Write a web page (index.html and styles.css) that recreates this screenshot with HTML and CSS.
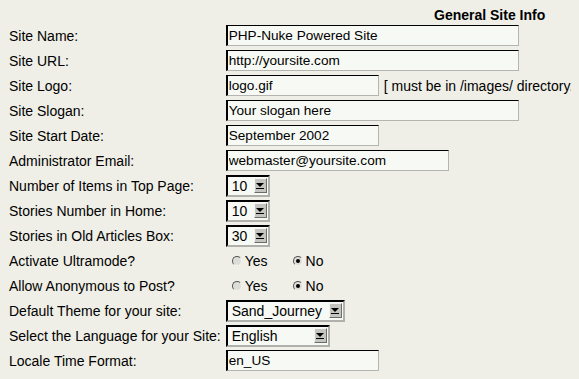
FILE: index.html
```html
<!DOCTYPE html>
<html>
<head>
<meta charset="utf-8">
<link rel="stylesheet" href="styles.css">
</head>
<body>
<div class="title">General Site Info</div>
<div class="form">
  <div class="label">Site Name:</div>
  <div class="field"><input class="text w-long" type="text" value="PHP-Nuke Powered Site"></div>

  <div class="label">Site URL:</div>
  <div class="field"><input class="text w-long" type="text" value="http://yoursite.com"></div>

  <div class="label">Site Logo:</div>
  <div class="field"><input class="text w-short" type="text" value="logo.gif"><span class="note">[ must be in /images/ directory.</span></div>

  <div class="label">Site Slogan:</div>
  <div class="field"><input class="text w-long" type="text" value="Your slogan here"></div>

  <div class="label">Site Start Date:</div>
  <div class="field"><input class="text w-short" type="text" value="September 2002"></div>

  <div class="label">Administrator Email:</div>
  <div class="field"><input class="text w-mid" type="text" value="webmaster@yoursite.com"></div>

  <div class="label">Number of Items in Top Page:</div>
  <div class="field"><div class="select w-num"><span class="sel-text">10</span><span class="sel-btn"><i class="arrow"></i></span></div></div>

  <div class="label">Stories Number in Home:</div>
  <div class="field"><div class="select w-num"><span class="sel-text">10</span><span class="sel-btn"><i class="arrow"></i></span></div></div>

  <div class="label">Stories in Old Articles Box:</div>
  <div class="field"><div class="select w-num"><span class="sel-text">30</span><span class="sel-btn"><i class="arrow"></i></span></div></div>

  <div class="label">Activate Ultramode?</div>
  <div class="field radios"><span class="radio"></span><span class="rlabel">Yes</span><span class="radio checked"></span><span class="rlabel">No</span></div>

  <div class="label">Allow Anonymous to Post?</div>
  <div class="field radios"><span class="radio"></span><span class="rlabel">Yes</span><span class="radio checked"></span><span class="rlabel">No</span></div>

  <div class="label">Default Theme for your site:</div>
  <div class="field"><div class="select w-theme"><span class="sel-text">Sand_Journey</span><span class="sel-btn"><i class="arrow"></i></span></div></div>

  <div class="label">Select the Language for your Site:</div>
  <div class="field"><div class="select w-lang"><span class="sel-text">English</span><span class="sel-btn"><i class="arrow"></i></span></div></div>

  <div class="label">Locale Time Format:</div>
  <div class="field"><input class="text w-short" type="text" value="en_US"></div>
</div>
</body>
</html>
```

FILE: styles.css
```css
html {
  overflow: hidden;
  background: #efefe7;
}
body {
  margin: 8px;
  font-family: "Liberation Sans", Arial, sans-serif;
  font-size: 14px;
  color: #000;
}
.title {
  font-weight: bold;
  font-size: 14px;
  line-height: 14px;
  padding-left: 426px;
  height: 15px;
}
.form {
  display: grid;
  grid-template-columns: max-content max-content;
  column-gap: 5px;
  grid-auto-rows: 25px;
  align-items: center;
}
.label {
  padding-left: 1px;
  white-space: nowrap;
}
.field {
  display: flex;
  align-items: center;
  white-space: nowrap;
}
.text {
  box-sizing: border-box;
  height: 21px;
  margin: 0;
  padding: 0 1px;
  font-family: "Liberation Sans", Arial, sans-serif;
  font-size: 13.6px;
  color: #000;
  background: #f7faf4;
  border-style: solid;
  border-width: 1px 1px 1px 2px;
  border-color: #000 #b4b4b0 #b4b4b0 #000;
  outline: none;
}
.w-long { width: 293px; }
.w-short { width: 153px; }
.w-mid { width: 223px; }
.note {
  margin-left: 5px;
}
.select {
  box-sizing: border-box;
  height: 22px;
  display: flex;
  align-items: center;
  background: #f7faf4;
  border-style: solid;
  border-width: 2px 2px 2px 2px;
  border-color: #000 #b0b0ac #b0b0ac #000;
}
.sel-text {
  flex: 1;
  padding-left: 4px;
}
.sel-btn {
  box-sizing: border-box;
  width: 13px;
  height: 15px;
  margin-right: 1px;
  background: #c4c4c0;
  border-style: solid;
  border-width: 1px;
  border-color: #f4f4f0 #6c6c68 #6c6c68 #f4f4f0;
  display: flex;
  flex-direction: column;
  align-items: center;
  justify-content: center;
}
.arrow {
  display: block;
  width: 0;
  height: 0;
  border-left: 4px solid transparent;
  border-right: 4px solid transparent;
  border-top: 4px solid #000;
  position: relative;
  margin-top: -2px;
}
.arrow::after {
  content: "";
  position: absolute;
  left: -4px;
  top: 1px;
  width: 8px;
  height: 1px;
  background: #000;
}
.w-num { width: 44px; }
.w-theme { width: 119px; }
.w-lang { width: 104px; }
.radios {
  padding-left: 6px;
}
.radio {
  box-sizing: border-box;
  width: 10px;
  height: 10px;
  border-radius: 50%;
  background: #dcdcd8;
  border: 1px solid;
  border-color: #555 #f4f4f0 #f4f4f0 #555;
  margin-right: 3px;
  position: relative;
}
.radio.checked::after {
  content: "";
  position: absolute;
  left: 2px;
  top: 2px;
  width: 4px;
  height: 4px;
  border-radius: 50%;
  background: #000;
}
.rlabel {
  margin-right: 25px;
}
```
